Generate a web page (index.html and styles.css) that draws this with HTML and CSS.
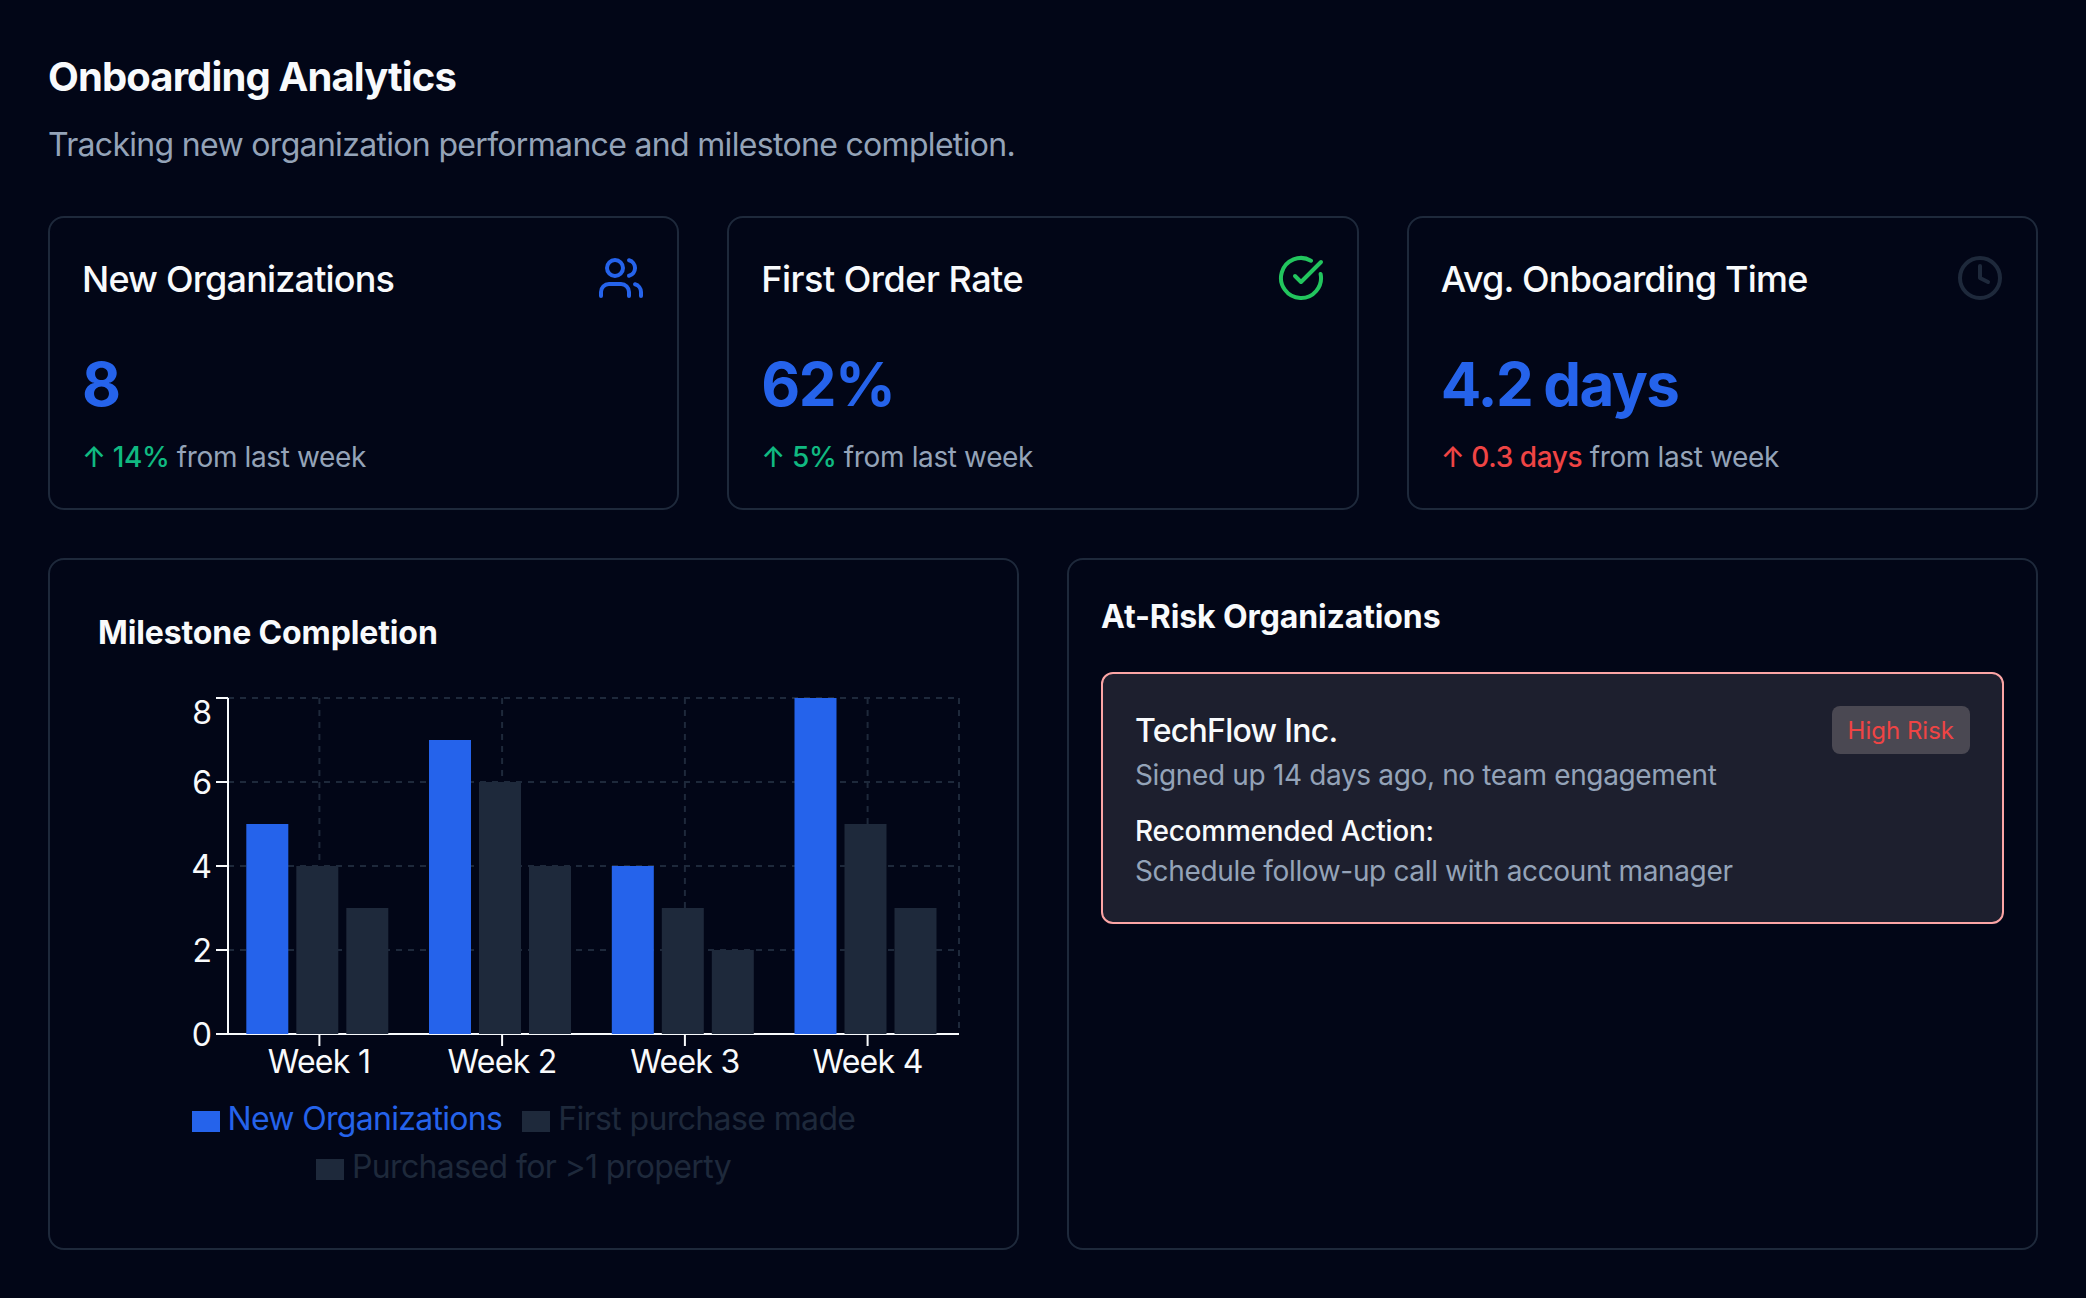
FILE: index.html
```html
<!DOCTYPE html>
<html lang="en">
<head>
<meta charset="utf-8">
<title>Onboarding Analytics</title>
<link rel="stylesheet" href="styles.css">
</head>
<body>
<main class="page">
  <header class="page-header">
    <h1 class="page-title">Onboarding Analytics</h1>
    <p class="page-subtitle">Tracking new organization performance and milestone completion.</p>
  </header>

  <section class="stats">
    <article class="card stat">
      <div class="stat-head">
        <h2 class="stat-title">New Organizations</h2>
        <svg class="icon icon-blue" viewBox="0 0 24 24"><path d="M16 21v-2a4 4 0 0 0-4-4H6a4 4 0 0 0-4 4v2"/><circle cx="9" cy="7" r="4"/><path d="M22 21v-2a4 4 0 0 0-3-3.87"/><path d="M16 3.13a4 4 0 0 1 0 7.75"/></svg>
      </div>
      <p class="stat-value">8</p>
      <p class="stat-note"><span class="delta up">↑ 14%</span> from last week</p>
    </article>
    <article class="card stat">
      <div class="stat-head">
        <h2 class="stat-title stat-title-wide">First Order Rate</h2>
        <svg class="icon icon-green" viewBox="0 0 24 24"><path d="M21.801 10A10 10 0 1 1 17 3.335"/><path d="m9 11 3 3L22 4"/></svg>
      </div>
      <p class="stat-value">62%</p>
      <p class="stat-note"><span class="delta up">↑ 5%</span> from last week</p>
    </article>
    <article class="card stat">
      <div class="stat-head">
        <h2 class="stat-title">Avg. Onboarding Time</h2>
        <svg class="icon icon-dim" viewBox="0 0 24 24"><circle cx="12" cy="12" r="10"/><path d="M12 6v6l4 2"/></svg>
      </div>
      <p class="stat-value">4.2 days</p>
      <p class="stat-note"><span class="delta down">↑ 0.3 days</span> from last week</p>
    </article>
  </section>

  <section class="panels">
    <article class="card milestone">
      <h2 class="panel-title">Milestone Completion</h2>
      <svg class="chart" viewBox="0 0 871 406">
        <g class="grid">
          <path d="M130 10H861M130 94H861M130 178H861M130 262H861"/>
          <path d="M221.4 10V346M404.1 10V346M586.9 10V346M769.6 10V346M861 10V346"/>
        </g>
        <path class="axis" d="M130 10V346M118 10H130M118 94H130M118 178H130M118 262H130M118 346H861M221.4 346V358M404.1 346V358M586.9 346V358M769.6 346V358"/>
        <g class="bar-primary">
          <rect x="148.3" y="136" width="42" height="210"/>
          <rect x="331" y="52" width="42" height="294"/>
          <rect x="513.8" y="178" width="42" height="168"/>
          <rect x="696.5" y="10" width="42" height="336"/>
        </g>
        <g class="bar-muted">
          <rect x="198.3" y="178" width="42" height="168"/>
          <rect x="381" y="94" width="42" height="252"/>
          <rect x="563.8" y="220" width="42" height="126"/>
          <rect x="746.5" y="136" width="42" height="210"/>
          <rect x="248.3" y="220" width="42" height="126"/>
          <rect x="431" y="178" width="42" height="168"/>
          <rect x="613.8" y="262" width="42" height="84"/>
          <rect x="796.5" y="220" width="42" height="126"/>
        </g>
        <g class="tick tick-y">
          <text x="114" y="36">8</text>
          <text x="114" y="105.5">6</text>
          <text x="114" y="189.5">4</text>
          <text x="114" y="273.5">2</text>
          <text x="114" y="357.5">0</text>
        </g>
        <g class="tick tick-x">
          <text x="221" y="385">Week 1</text>
          <text x="404.1" y="385">Week 2</text>
          <text x="586.9" y="385">Week 3</text>
          <text x="769.6" y="385">Week 4</text>
        </g>
      </svg>
      <ul class="legend">
        <li class="legend-item primary"><i class="swatch"></i><span class="legend-label">New Organizations</span></li>
        <li class="legend-item"><i class="swatch"></i><span class="legend-label">First purchase made</span></li>
        <li class="legend-item"><i class="swatch"></i><span class="legend-label">Purchased for &gt;1 property</span></li>
      </ul>
    </article>

    <article class="card at-risk">
      <h2 class="panel-title">At-Risk Organizations</h2>
      <div class="alert">
        <div class="alert-head">
          <div>
            <h3 class="alert-name">TechFlow Inc.</h3>
            <p class="alert-text">Signed up 14 days ago, no team engagement</p>
          </div>
          <span class="badge">High Risk</span>
        </div>
        <div class="alert-action">
          <p class="alert-label">Recommended Action:</p>
          <p class="alert-text">Schedule follow-up call with account manager</p>
        </div>
      </div>
    </article>
  </section>
</main>
</body>
</html>
```
FILE: styles.css
```css
* { box-sizing: border-box; margin: 0; padding: 0; }

body {
  background: #020617;
  color: #f8fafc;
  font-family: Inter, "Liberation Sans", sans-serif;
  font-size: 32px;
  line-height: 48px;
}

.page {
  display: flex;
  flex-direction: column;
  gap: 48px;
  min-height: 1298px;
  padding: 48px;
}

.page-header { display: flex; flex-direction: column; gap: 16px; }
.page-title { padding-top: 2px; font-size: 40px; line-height: 54px; font-weight: 700; letter-spacing: -0.88px; }
.page-subtitle { padding-top: 2px; line-height: 46px; color: #94a3b8; letter-spacing: -0.68px; }

.card { border: 2px solid #1e293b; border-radius: 16px; }

.stats { display: grid; grid-template-columns: repeat(3, 1fr); gap: 48px; }
.stat { height: 294px; padding: 32px; }
.stat-head { display: flex; align-items: center; justify-content: space-between; margin-bottom: 42px; }
.stat-title { padding-top: 2px; font-size: 36px; line-height: 54px; font-weight: 500; letter-spacing: -0.83px; }
.stat-title-wide { letter-spacing: -0.5px; }
.stat-value {
  margin-bottom: 16px;
  color: #2563eb;
  font-size: 60px;
  line-height: 72px;
  font-weight: 700;
  letter-spacing: -1.6px;
  word-spacing: -1.5px;
}
.stat-note { padding-top: 2px; color: #94a3b8; font-size: 28px; line-height: 38px; letter-spacing: -0.37px; }
.delta { font-weight: 500; letter-spacing: -0.4px; }
.up { color: #10b981; }
.down { color: #ef4444; }

.icon {
  width: 48px;
  height: 48px;
  fill: none;
  stroke: currentColor;
  stroke-width: 2;
  stroke-linecap: round;
  stroke-linejoin: round;
}
.icon-blue { color: #2563eb; }
.icon-green { color: #22c55e; }
.icon-dim { color: #1e293b; }

.panels { display: grid; grid-template-columns: repeat(2, 1fr); gap: 48px; height: 692px; }
.panel-title {
  margin-bottom: 32px;
  padding-top: 2px;
  font-size: 32px;
  line-height: 46px;
  font-weight: 700;
  letter-spacing: -0.12px;
}

.milestone { padding: 48px; }
.chart { display: block; width: 871px; height: 406px; }
.grid { fill: none; stroke: #1e293b; stroke-width: 2; stroke-dasharray: 6 6; }
.axis { fill: none; stroke: #f8fafc; stroke-width: 2; }
.bar-primary { fill: #2563eb; }
.bar-muted { fill: #1e293b; }
.tick { fill: #f8fafc; font-size: 32px; }
.tick-y { text-anchor: end; }
.tick-x { text-anchor: middle; letter-spacing: -0.7px; }

.legend {
  display: flex;
  flex-wrap: wrap;
  justify-content: center;
  padding: 0 10px;
  list-style: none;
  color: #1e293b;
}
.legend-item { display: flex; align-items: center; gap: 8px; margin-right: 20px; }
.legend-item.primary { color: #2563eb; }
.legend-label { padding-top: 2px; line-height: 46px; letter-spacing: -0.62px; }
.primary .legend-label { letter-spacing: -0.7px; }
.swatch { width: 28px; height: 21px; margin-top: 7px; background: currentColor; }

.at-risk { padding: 32px; }
.alert {
  padding: 32px;
  border: 2px solid #fca5a5;
  border-radius: 12px;
  background: #1d1f2e;
}
.alert-head { display: flex; align-items: flex-start; justify-content: space-between; }
.alert-name { padding-top: 2px; font-size: 32px; line-height: 46px; font-weight: 500; letter-spacing: -0.72px; }
.alert-text { padding-top: 2px; color: #94a3b8; font-size: 28px; line-height: 38px; letter-spacing: -0.35px; }
.alert-action { margin-top: 16px; }
.alert-label { padding-top: 2px; font-size: 28px; line-height: 38px; font-weight: 500; letter-spacing: -0.25px; }
.badge {
  padding: 9px 16px 7px;
  border-radius: 8px;
  background: #4a4852;
  color: #ef4444;
  font-size: 24px;
  line-height: 32px;
}
```
